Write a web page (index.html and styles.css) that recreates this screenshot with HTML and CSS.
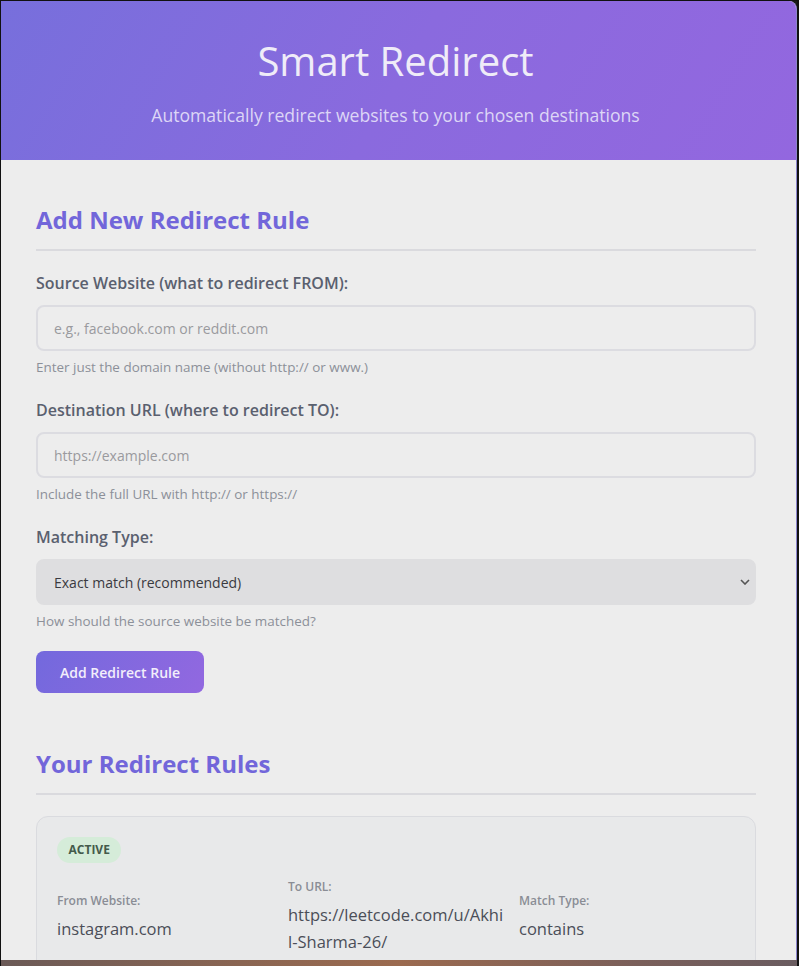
FILE: index.html
```html
<!DOCTYPE html>
<html lang="en">
<head>
<meta charset="utf-8">
<title>Smart Redirect</title>
<link rel="stylesheet" href="styles.css">
</head>
<body>
<div class="screen">
  <div class="window">
    <header class="header">
      <h1 class="title">Smart Redirect</h1>
      <p class="subtitle">Automatically redirect websites to your chosen destinations</p>
    </header>
    <main class="content">
      <section class="section">
        <h2 class="section-title">Add New Redirect Rule</h2>
        <div class="form-group">
          <label class="label" for="src">Source Website (what to redirect FROM):</label>
          <input class="input" id="src" type="text" placeholder="e.g., facebook.com or reddit.com">
          <div class="hint">Enter just the domain name (without http:// or www.)</div>
        </div>
        <div class="form-group">
          <label class="label" for="dst">Destination URL (where to redirect TO):</label>
          <input class="input" id="dst" type="text" placeholder="https://example.com">
          <div class="hint">Include the full URL with http:// or https://</div>
        </div>
        <div class="form-group form-group-last">
          <label class="label" for="type">Matching Type:</label>
          <div class="select-wrap">
            <select class="select" id="type">
              <option>Exact match (recommended)</option>
              <option>Contains</option>
            </select>
            <svg class="chevron" width="10" height="6" viewBox="0 0 10 6"><path d="M1 1l4 4 4-4" fill="none" stroke="#555" stroke-width="1.6"/></svg>
          </div>
          <div class="hint">How should the source website be matched?</div>
        </div>
        <button class="btn" type="button">Add Redirect Rule</button>
      </section>
      <section class="section rules">
        <h2 class="section-title">Your Redirect Rules</h2>
        <div class="rule-card">
          <span class="badge">ACTIVE</span>
          <div class="rule-grid">
            <div class="rule-item">
              <div class="rule-label">From Website:</div>
              <div class="rule-value">instagram.com</div>
            </div>
            <div class="rule-item">
              <div class="rule-label">To URL:</div>
              <div class="rule-value">https://leetcode.com/u/Akhil-Sharma-26/</div>
            </div>
            <div class="rule-item">
              <div class="rule-label">Match Type:</div>
              <div class="rule-value">contains</div>
            </div>
          </div>
        </div>
      </section>
    </main>
  </div>
  <div class="desktop-strip"></div>
</div>
</body>
</html>
```

FILE: styles.css
```css
* { box-sizing: border-box; }

html, body {
  margin: 0;
  padding: 0;
  background: #1a1a1a;
}

body {
  font-family: "Open Sans", "Noto Sans", sans-serif;
  width: 799px;
  height: 966px;
  overflow: hidden;
}

.screen {
  display: flex;
  flex-direction: column;
  height: 966px;
  border-left: 1px solid #111;
  border-top: 1px solid #111;
  border-right: 2px solid #111;
}

.window {
  height: 959px;
  overflow: hidden;
  background: #ededed;
  border-right: 1px solid #8a84cc;
  border-top-right-radius: 8px;
}

.desktop-strip {
  flex: 1;
  background: linear-gradient(90deg, #6b5a57 0%, #8a6552 30%, #9b6a4f 50%, #7a5f5a 80%, #6a5c60 100%);
}

.header {
  background: linear-gradient(120deg, #776fdc 0%, #8a6ade 50%, #9367df 100%);
  padding: 33px 26px 32px 20px;
  text-align: center;
  color: #f1eefa;
}

.title {
  margin: 0 0 15px;
  font-size: 40px;
  font-weight: 400;
  line-height: 54px;
  color: #efecf8;
}

.subtitle {
  margin: 0;
  font-size: 17.6px;
  line-height: 25px;
  color: #ddd6f6;
}

.content {
  padding: 43px 40px 0 35px;
}

.section-title {
  margin: 0 0 21px;
  padding-bottom: 13px;
  border-bottom: 2px solid #dadade;
  font-size: 24px;
  line-height: 33px;
  font-weight: 700;
  color: #7266da;
}

.form-group {
  margin-bottom: 22px;
}

.form-group-last {
  margin-bottom: 20px;
}

.label {
  display: block;
  margin-bottom: 11px;
  font-size: 16px;
  line-height: 22px;
  font-weight: 600;
  color: #5a606f;
}

.input {
  display: block;
  width: 100%;
  height: 46px;
  padding: 0 16px;
  border: 2px solid #dcdce1;
  border-radius: 8px;
  background: #ededed;
  font-family: inherit;
  font-size: 14px;
  color: #333;
  outline: none;
}

.input::placeholder {
  color: #9a9a9e;
}

.select-wrap {
  position: relative;
}

.select {
  display: block;
  width: 100%;
  height: 46px;
  padding: 0 16px;
  border: 2px solid #dedee0;
  border-radius: 8px;
  background: #dedee0;
  font-family: inherit;
  font-size: 14px;
  color: #3a3a40;
  appearance: none;
  -webkit-appearance: none;
  outline: none;
}

.chevron {
  position: absolute;
  right: 6px;
  top: 20px;
}

.hint {
  margin-top: 7px;
  font-size: 13.45px;
  line-height: 19px;
  color: #8c9099;
}

.btn {
  display: block;
  height: 42px;
  padding: 0 24px;
  border: none;
  border-radius: 8px;
  background: linear-gradient(120deg, #7369dd 0%, #9268e0 100%);
  color: #f2eefb;
  font-family: inherit;
  font-size: 14px;
  font-weight: 600;
}

.rules {
  margin-top: 54px;
}

.rule-card {
  border: 1px solid #dadbdf;
  border-radius: 12px;
  background: #e8e9ea;
  padding: 20px 20px 24px;
}

.badge {
  display: inline-block;
  padding: 5px 11.5px;
  border-radius: 13px;
  background: #d5ecd9;
  color: #445a4b;
  font-size: 12px;
  line-height: 16px;
  font-weight: 700;
}

.rule-grid {
  margin-top: 16px;
  display: grid;
  grid-template-columns: repeat(3, 1fr);
  gap: 15px;
  align-items: center;
}

.rule-label {
  font-size: 12px;
  line-height: 16px;
  font-weight: 600;
  color: #8a8d95;
  margin-bottom: 6px;
}

.rule-value {
  font-size: 16.5px;
  line-height: 27px;
  color: #4b4e58;
  word-break: break-all;
}
```
